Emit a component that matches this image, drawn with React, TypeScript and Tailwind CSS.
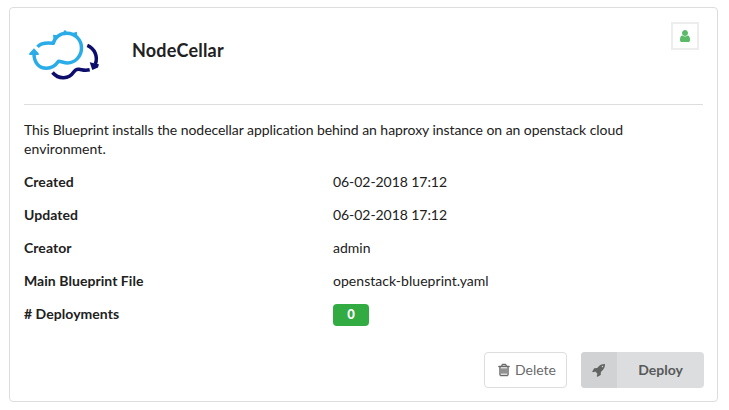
import type { ReactNode } from "react";

function Icon({ d, size, className }: { d: string; size: number; className?: string }) {
  return (
    <svg viewBox="0 0 1792 1792" width={size} height={size} fill="currentColor" className={className}>
      <path d={d} />
    </svg>
  );
}

const USER =
  "M1536 1399q0 109-62.5 187t-150.5 78h-854q-88 0-150.5-78t-62.5-187q0-85 8.5-160.5t31.5-152 58.5-131 94-89 134.5-34.5q131 128 313 128t313-128q76 0 134.5 34.5t94 89 58.5 131 31.5 152 8.5 160.5zm-256-887q0 159-112.5 271.5t-271.5 112.5-271.5-112.5-112.5-271.5 112.5-271.5 271.5-112.5 271.5 112.5 112.5 271.5z";
const TRASH =
  "M704 736v576q0 14-9 23t-23 9h-64q-14 0-23-9t-9-23v-576q0-14 9-23t23-9h64q14 0 23 9t9 23zm256 0v576q0 14-9 23t-23 9h-64q-14 0-23-9t-9-23v-576q0-14 9-23t23-9h64q14 0 23 9t9 23zm256 0v576q0 14-9 23t-23 9h-64q-14 0-23-9t-9-23v-576q0-14 9-23t23-9h64q14 0 23 9t9 23zm128 724v-948h-896v948q0 22 7 40.5t14.5 27 10.5 8.5h832q3 0 10.5-8.5t14.5-27 7-40.5zm-672-1076h448l-48-117q-7-9-17-11h-317q-10 2-17 11zm928 32v64q0 14-9 23t-23 9h-96v948q0 83-47 143.5t-113 60.5h-832q-66 0-113-58.5t-47-141.5v-952h-96q-14 0-23-9t-9-23v-64q0-14 9-23t23-9h309l70-167q15-37 54-63t79-26h320q40 0 79 26t54 63l70 167h309q14 0 23 9t9 23z";
const ROCKET =
  "M1440 448q0-40-28-68t-68-28-68 28-28 68 28 68 68 28 68-28 28-68zm224-288q0 249-75.5 430.5t-253.5 360.5q-81 80-195 176l-20 379q-2 16-16 26l-384 224q-7 4-16 4-12 0-23-9l-64-64q-13-14-8-32l85-276-281-281-276 85q-3 1-9 1-14 0-23-9l-64-64q-17-19-5-39l224-384q10-14 26-16l379-20q96-114 176-195 188-187 358-258t431-71q14 0 24 9.5t10 22.5z";

function CloudLogo() {
  return (
    <svg viewBox="24 24 80 60" width="80" height="60" fill="none" strokeWidth="3.5" strokeLinejoin="round">
      <path stroke="#2aace8" d="M37.5 46.800C41 42.800 46 42.300 53.300 43.300C54.500 37.500 60 33.300 67 33.300C75.300 33.300 81.500 40 81.500 48C81.500 56.500 75 62.900 67.500 62.900C64 62.900 61.500 61.400 58.500 61.200C55.500 65.500 52 68.200 46.500 68.200C39 68.200 34 62.500 34 54" />
      <path fill="#2aace8" d="M34 48.300L38.700 53.200V55H29.300V53.200ZM53 34.800L59.500 35.500L54 43ZM62 33.500L65 29.800L68 33.500ZM71 33.500L76.800 31.700L77.500 37.500Z" />
      <path stroke="#0d0d6b" d="M87.300 45.300C94.500 48.300 98.300 56.500 95.300 64M52.500 72.500C59 80 69 79 73.500 72.300C75 70 76.300 68.800 79 69.200C82.500 69.700 84 71 89.700 69.800" />
      <path fill="#0d0d6b" d="M89.700 62.200L98.900 64.300L98 67.500L92.300 69.900Z" />
    </svg>
  );
}

function Row({ label, children }: { label: string; children: ReactNode }) {
  return (
    <div className="flex h-[33px] items-center">
      <div className="w-[309px] font-bold tracking-[0.05px]">{label}</div>
      <div>{children}</div>
    </div>
  );
}

export default function App() {
  return (
    <div className="h-[410px] w-[729px] bg-white pl-[9px] pt-[7px] font-['Lato',sans-serif] text-sm text-[#212121]">
      <div className="h-[395px] w-[709px] rounded border border-[#dcddde] pl-3.5">
        <header className="flex h-[97px] w-[679px] items-start border-b border-[#dcddde]">
          <div className="pt-4">
            <CloudLogo />
          </div>
          <h1 className="ml-7 mt-[30px] text-lg leading-6 font-bold tracking-[0.2px]">NodeCellar</h1>
          <div className="ml-auto mr-1 mt-3.5 flex size-7 items-center justify-center border-2 border-[#ededed] text-[#5abb67]">
            <Icon d={USER} size={14} />
          </div>
        </header>
        <p className="mt-[15px] w-[650px] leading-[19px] tracking-[-0.055px]">
          This Blueprint installs the nodecellar application behind an haproxy instance on an openstack cloud{" "}
          <span className="tracking-[0.05px]">environment.</span>
        </p>
        <div className="mt-[7px]">
          <Row label="Created"><span className="tracking-[-0.06px]">06-02-2018 17:12</span></Row>
          <Row label="Updated"><span className="tracking-[-0.06px]">06-02-2018 17:12</span></Row>
          <Row label="Creator">admin</Row>
          <Row label="Main Blueprint File"><span className="tracking-[0.04px]">openstack-blueprint.yaml</span></Row>
          <Row label="# Deployments">
            <div className="mt-[2px] flex h-[22px] w-9 items-center justify-center rounded bg-[#31ab42] text-[13px] font-black text-white">0</div>
          </Row>
        </div>
        <div className="mt-[22px] flex w-[680px] justify-end gap-3.5">
          <button className="flex h-9 w-[83px] items-center rounded border border-[#dcddde] pl-3 text-[#696a6b]">
            <Icon d={TRASH} size={14} className="stroke-current [stroke-width:60]" />
            <span className="ml-[4px]">Delete</span>
          </button>
          <button className="flex h-9 w-[123px] overflow-hidden rounded bg-[#dcddde] font-bold text-[#58595a]">
            <span className="flex h-9 w-9 items-center justify-center bg-[#d1d2d3] text-[#626363]">
              <Icon d={ROCKET} size={14} />
            </span>
            <span className="flex h-9 flex-1 items-center justify-center">Deploy</span>
          </button>
        </div>
      </div>
    </div>
  );
}
